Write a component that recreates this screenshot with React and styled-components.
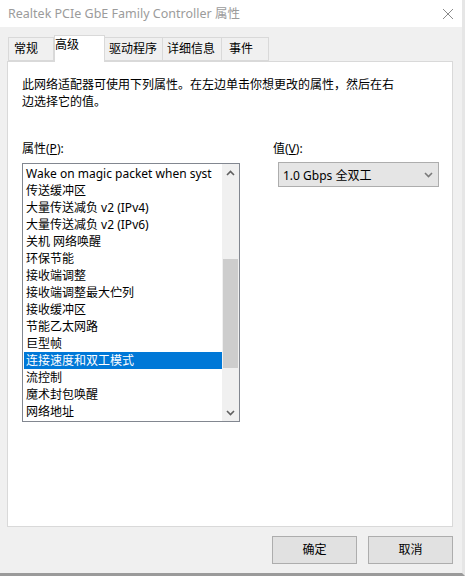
import React from "react";
import styled, { createGlobalStyle } from "styled-components";

const Global = createGlobalStyle`
  html, body { margin: 0; padding: 0; background: #f0f0f0; }
  body { font-family: "Noto Sans", "Noto Sans CJK SC", sans-serif; font-size: 12px; }
  * { box-sizing: border-box; }
`;

const Window = styled.div`
  width: 465px;
  height: 576px;
  background: #f0f0f0;
  display: flex;
  flex-direction: column;
  border-right: 3px solid #e6e6e6;
  border-bottom: 3px solid #9a9a9a;
`;

const TitleBar = styled.div`
  height: 27px;
  background: #ffffff;
  display: flex;
  align-items: center;
  justify-content: space-between;
  padding: 0 6px 0 8px;
  color: #9b9b9b;
  font-size: 12.5px;
  line-height: 16px;
`;

const Close = styled.svg`
  width: 12px;
  height: 12px;
  margin-right: 2px;
`;

const Body = styled.div`
  flex: 1;
  display: flex;
  flex-direction: column;
  padding: 8px 9px 0 7px;
`;

const TabStrip = styled.div`
  display: flex;
  align-items: flex-end;
  height: 26px;
  padding-left: 1px;
`;

const Tab = styled.div`
  width: ${(p) => p.$w}px;
  height: ${(p) => (p.$active ? "27px" : "24px")};
  margin-bottom: ${(p) => (p.$active ? "-1px" : "0")};
  padding: ${(p) => (p.$active ? "3px 0 0" : "0")} 0 0 ${(p) => p.$pad}px;
  background: ${(p) => (p.$active ? "#ffffff" : "#f0f0f0")};
  border: 1px solid #d9d9d9;
  border-bottom: ${(p) => (p.$active ? "none" : "1px solid #d9d9d9")};
  border-left: ${(p) => (p.$first || p.$active ? "1px solid #d9d9d9" : "none")};
  display: flex;
  align-items: ${(p) => (p.$active ? "flex-start" : "center")};
  font-size: 12px;
  line-height: 18px;
  color: #000;
  position: relative;
  z-index: ${(p) => (p.$active ? 2 : 1)};
`;

const Panel = styled.div`
  height: 466px;
  background: #ffffff;
  border: 1px solid #d9d9d9;
  padding: 14px 14px 0 14px;
  display: flex;
  flex-direction: column;
`;

const Intro = styled.p`
  margin: 0;
  font-size: 12px;
  line-height: 17px;
  width: 378px;
  color: #000;
`;

const Columns = styled.div`
  display: flex;
  margin-top: 30px;
`;

const LeftCol = styled.div`
  display: flex;
  flex-direction: column;
  width: 218px;
`;

const RightCol = styled.div`
  display: flex;
  flex-direction: column;
  margin-left: 33px;
`;

const Label = styled.div`
  font-size: 12px;
  line-height: 17px;
  height: 17px;
  margin-bottom: 6px;
  u { text-decoration: underline; }
`;

const ListBox = styled.div`
  width: 218px;
  height: 259px;
  border: 1px solid #828790;
  display: flex;
  padding: 1px 0 0 1px;
`;

const Items = styled.div`
  flex: 1;
  min-width: 0;
  display: flex;
  flex-direction: column;
  overflow: hidden;
`;

const Item = styled.div`
  height: 17px;
  line-height: 17px;
  padding-left: 2px;
  font-size: 12px;
  white-space: nowrap;
  overflow: hidden;
  text-overflow: clip;
  background: ${(p) => (p.$selected ? "#0078d7" : "transparent")};
  color: ${(p) => (p.$selected ? "#ffffff" : "#000000")};
`;

const ScrollBar = styled.div`
  width: 17px;
  flex: none;
  margin-top: -1px;
  background: #f0f0f0;
  display: flex;
  flex-direction: column;
  align-items: center;
`;

const ArrowBtn = styled.div`
  height: 17px;
  width: 17px;
  display: flex;
  align-items: center;
  justify-content: center;
`;

const Track = styled.div`
  flex: 1;
  width: 100%;
  display: flex;
  flex-direction: column;
  padding: 78px 1px 0 1px;
`;

const Thumb = styled.div`
  height: 109px;
  background: #cdcdcd;
`;

const Select = styled.div`
  width: 161px;
  height: 25px;
  margin-left: 5px;
  margin-top: -1px;
  background: #e5e5e5;
  border: 1px solid #adadad;
  display: flex;
  align-items: center;
  justify-content: space-between;
  padding: 0 5px 0 4px;
  font-size: 12px;
`;

const Footer = styled.div`
  flex: 1;
  display: flex;
  justify-content: flex-end;
  align-items: flex-start;
  padding-top: 9px;
  gap: 11px;
`;

const Button = styled.button`
  width: 85px;
  height: 28px;
  background: #e1e1e1;
  border: 1px solid #adadad;
  font-family: "Noto Sans", "Noto Sans CJK SC", sans-serif;
  font-size: 12px;
  color: #000;
  padding: 0;
  line-height: 16px;
`;

const items = [
  "Wake on magic packet when syst",
  "传送缓冲区",
  "大量传送减负 v2 (IPv4)",
  "大量传送减负 v2 (IPv6)",
  "关机 网络唤醒",
  "环保节能",
  "接收端调整",
  "接收端调整最大伫列",
  "接收缓冲区",
  "节能乙太网路",
  "巨型帧",
  "连接速度和双工模式",
  "流控制",
  "魔术封包唤醒",
  "网络地址",
];

const tabs = [
  { t: "常规", w: 46, pad: 5, first: true },
  { t: "高级", w: 51, pad: 7, active: true },
  { t: "驱动程序", w: 58, pad: 4 },
  { t: "详细信息", w: 59, pad: 4 },
  { t: "事件", w: 47, pad: 7 },
];

const Chevron = ({ up, color = "#606060" }) => (
  <svg width="9" height="6" viewBox="0 0 9 6">
    <path
      d={up ? "M1 5 L4.5 1.5 L8 5" : "M1 1 L4.5 4.5 L8 1"}
      fill="none"
      stroke={color}
      strokeWidth="1.6"
    />
  </svg>
);

export default function App() {
  return (
    <>
      <Global />
      <Window>
        <TitleBar>
          <span>Realtek PCIe GbE Family Controller 属性</span>
          <Close viewBox="0 0 12 12">
            <path d="M1 1 L11 11 M11 1 L1 11" stroke="#8a8a8a" strokeWidth="1" />
          </Close>
        </TitleBar>
        <Body>
          <TabStrip>
            {tabs.map((tb) => (
              <Tab key={tb.t} $w={tb.w} $pad={tb.pad} $first={tb.first} $active={tb.active}>
                {tb.t}
              </Tab>
            ))}
          </TabStrip>
          <Panel>
            <Intro>
              此网络适配器可使用下列属性。在左边单击你想更改的属性，然后在右边选择它的值。
            </Intro>
            <Columns>
              <LeftCol>
                <Label>
                  属性(<u>P</u>):
                </Label>
                <ListBox>
                  <Items>
                    {items.map((t) => (
                      <Item key={t} $selected={t === "连接速度和双工模式"}>
                        {t}
                      </Item>
                    ))}
                  </Items>
                  <ScrollBar>
                    <ArrowBtn>
                      <Chevron up />
                    </ArrowBtn>
                    <Track>
                      <Thumb />
                    </Track>
                    <ArrowBtn>
                      <Chevron />
                    </ArrowBtn>
                  </ScrollBar>
                </ListBox>
              </LeftCol>
              <RightCol>
                <Label>
                  值(<u>V</u>):
                </Label>
                <Select>
                  <span>1.0 Gbps 全双工</span>
                  <Chevron color="#7a7a7a" />
                </Select>
              </RightCol>
            </Columns>
          </Panel>
          <Footer>
            <Button>确定</Button>
            <Button>取消</Button>
          </Footer>
        </Body>
      </Window>
    </>
  );
}
